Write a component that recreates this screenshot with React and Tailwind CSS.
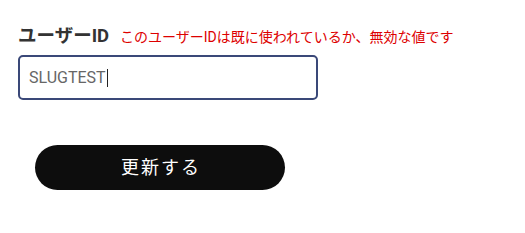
import React from "react";

const App = () => {
  return (
    <div className="w-[525px] h-[233px] bg-white" style={{ fontFamily: "Roboto, 'Noto Sans CJK JP', sans-serif" }}>
      {/* Field */}
      <div className="pt-[25px] pl-[18px]">
        <div className="flex items-center gap-[11px] h-[24px]">
          <span className="text-[18.5px] font-bold text-[#333333]">ユーザーID</span>
          <span className="text-[14px] text-[#dd0000]">このユーザーIDは既に使われているか、無効な値です</span>
        </div>
        <div className="mt-[6px] w-[300px] h-[45px] border-2 border-[#3a4878] rounded-[5px] flex items-center pl-[9px]">
          <span className="text-[16px] text-[#666666]">SLUGTEST</span>
          <span className="w-px h-[18px] bg-[#222222] ml-px"></span>
        </div>
      </div>

      {/* Button */}
      <div className="pl-[35px] mt-[45px]">
        <button className="w-[250px] h-[45px] rounded-full bg-[#0d0d0d] text-white text-[18px] tracking-[2px] pl-[2px]">
          更新する
        </button>
      </div>
    </div>
  );
};

export default App;
